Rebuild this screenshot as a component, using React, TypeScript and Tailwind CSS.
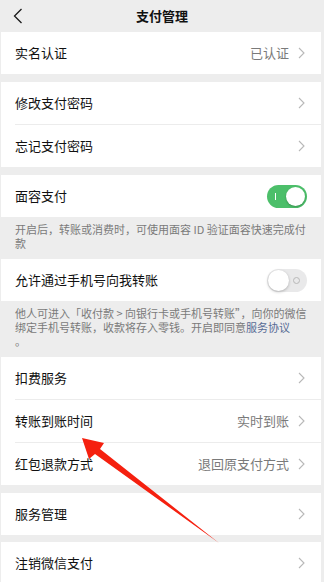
import React from "react";

const font = {
  fontFamily: '"Noto Sans CJK SC", "Noto Sans", sans-serif',
};

function Chevron() {
  return (
    <svg width="7" height="12" viewBox="0 0 7 12" className="shrink-0">
      <path d="M1 1l5 5-5 5" fill="none" stroke="#b8b8b8" strokeWidth="1.1" />
    </svg>
  );
}

function Row({
  label,
  value,
  divider,
}: {
  label: string;
  value?: string;
  divider?: boolean;
}) {
  return (
    <div className="bg-white">
      <div className="h-[42px] flex items-center pl-[14px] pr-[16px]">
        <span className="flex-1 text-[13px] text-[#111111]">{label}</span>
        {value && (
          <span className="text-[13px] text-[#7a7a7a] mr-[9px]">{value}</span>
        )}
        <Chevron />
      </div>
      {divider && <div className="ml-[14px] h-px bg-[#ececec]" />}
    </div>
  );
}

function Toggle({ on }: { on: boolean }) {
  if (on) {
    return (
      <div className="relative w-[40px] h-[23px] rounded-full bg-[#4cbf6a] shrink-0">
        <div className="absolute left-[8px] top-[8px] w-px h-[7px] bg-white" />
        <div className="absolute right-[2px] top-[2px] w-[19px] h-[19px] rounded-full bg-white shadow-[0_1px_2px_rgba(0,0,0,0.25)]" />
      </div>
    );
  }
  return (
    <div className="relative w-[40px] h-[23px] rounded-full bg-[#e9e9ea] shrink-0">
      <div className="absolute right-[7px] top-[8px] w-[7px] h-[7px] rounded-full border border-[#b8b8b8]" />
      <div className="absolute left-[1px] top-[1px] w-[21px] h-[21px] rounded-full bg-white shadow-[0_1px_3px_rgba(0,0,0,0.25)]" />
    </div>
  );
}

function ToggleRow({ label, on }: { label: string; on: boolean }) {
  return (
    <div className="bg-white h-[42px] flex items-center pl-[14px] pr-[14px]">
      <span className="flex-1 text-[13px] text-[#111111]">{label}</span>
      <Toggle on={on} />
    </div>
  );
}

export default function App() {
  return (
    <div
      className="relative w-[324px] h-[582px] overflow-hidden bg-[#ededed]"
      style={font}
    >
      <div className="h-[32px] flex items-center relative">
        <svg
          width="10"
          height="16"
          viewBox="0 0 10 16"
          className="absolute left-[13px] top-[8px]"
        >
          <path d="M8.5 1L1.5 8l7 7" fill="none" stroke="#1a1a1a" strokeWidth="1.3" />
        </svg>
        <div className="flex-1 text-center text-[13px] font-semibold text-[#111111]">
          支付管理
        </div>
      </div>

      <div className="ml-px mr-[3px] flex flex-col">
        <Row label="实名认证" value="已认证" />
        <div className="h-[8px]" />
        <Row label="修改支付密码" divider />
        <Row label="忘记支付密码" />
        <div className="h-[8px]" />
        <ToggleRow label="面容支付" on />
        <div className="h-[42px] pt-[5px] pl-[14px] pr-[12px] text-[11px] leading-[14px] text-[#7a7a7a]">
          开启后，转账或消费时，可使用面容 ID 验证面容快速完成付款
        </div>
        <ToggleRow label="允许通过手机号向我转账" on={false} />
        <div className="h-[56px] pt-[5px] pl-[14px] pr-[12px] text-[11px] leading-[14px] text-[#7a7a7a]">
          <p>
            他人可进入「收付款 &gt; 向银行卡或手机号转账”，向你的微信绑定手机号转账，收款将存入零钱。开启即同意
            <span className="text-[#576b95]">服务协议</span>
          </p>
          <p>。</p>
        </div>
        <Row label="扣费服务" divider />
        <Row label="转账到账时间" value="实时到账" divider />
        <Row label="红包退款方式" value="退回原支付方式" />
        <div className="h-[8px]" />
        <Row label="服务管理" />
        <div className="h-[7px]" />
        <Row label="注销微信支付" />
      </div>

      <svg
        width="324"
        height="582"
        viewBox="0 0 324 582"
        className="absolute left-0 top-0 pointer-events-none"
      >
        <polygon
          points="82,438 104,443 100,449 219,543 95,454 89,459"
          fill="#f5200f"
        />
      </svg>
    </div>
  );
}
